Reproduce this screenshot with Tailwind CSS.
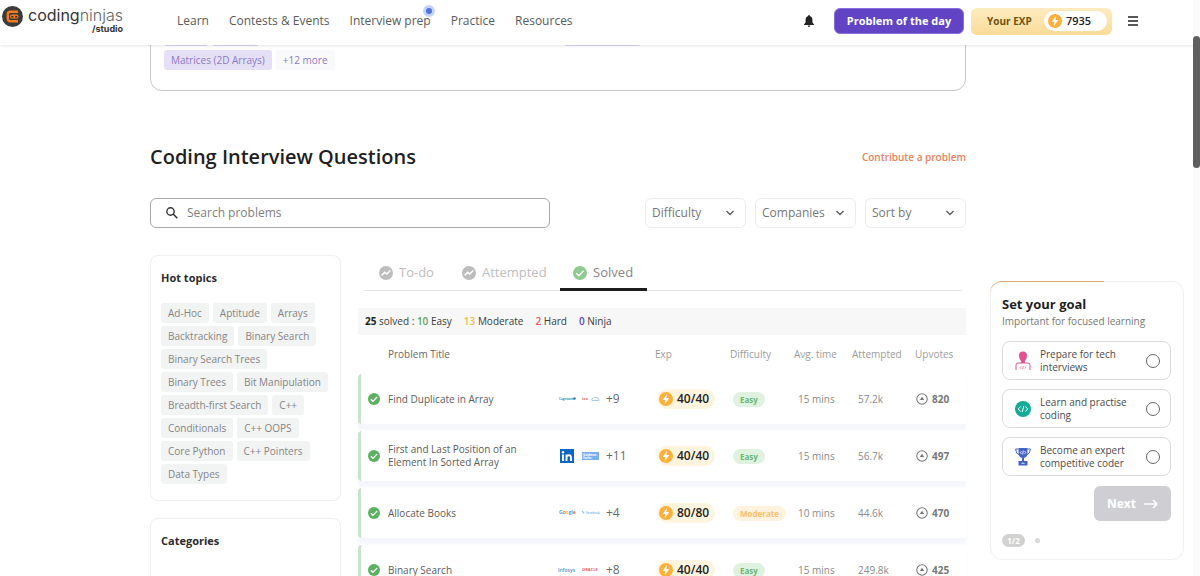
<!DOCTYPE html>
<html lang="en">
<head>
  <meta charset="UTF-8">
  <meta name="viewport" content="width=device-width, initial-scale=1.0">
  <title>Coding Interview Questions</title>
  <script src="https://cdn.jsdelivr.net/npm/@tailwindcss/browser@4"></script>
</head>
<body class="h-screen overflow-hidden bg-white font-['Open_Sans',sans-serif] text-[11px] text-[#5c5c5c]">

  <svg class="hidden">
    <symbol id="check" viewBox="0 0 16 16">
      <circle cx="8" cy="8" r="8" fill="currentColor"/>
      <path d="M3.8 8.3l2.8 2.8 5.6-5.7" fill="none" stroke="#fff" stroke-width="1.7"/>
    </symbol>
    <symbol id="trend" viewBox="0 0 16 16">
      <circle cx="8" cy="8" r="8" fill="currentColor"/>
      <path d="M3 10.7l3.6-3.6 2.2 2 4.2-4" fill="none" stroke="#fff" stroke-width="1.7"/>
    </symbol>
    <symbol id="bolt" viewBox="0 0 16 16">
      <circle cx="8" cy="8" r="8" fill="#fbb03b"/>
      <path d="M9.3 2L4.2 9h3.2l-.9 5 5.3-7.2H8.5z" fill="#fff"/>
    </symbol>
    <symbol id="upvote" viewBox="0 0 16 16">
      <circle cx="8" cy="8" r="7" fill="none" stroke="currentColor" stroke-width="1.4"/>
      <path d="M8 5l3 4.2H5z" fill="currentColor"/>
    </symbol>
    <symbol id="chevron" viewBox="0 0 10 10">
      <path d="M1.5 3L5 6.5 8.5 3" fill="none" stroke="currentColor" stroke-width="1.4"/>
    </symbol>
  </svg>

  <!-- header -->
  <header class="relative z-10 flex h-[45px] items-center bg-white pb-[3px] shadow-[0_1px_3px_rgba(0,0,0,0.10)]">
    <a href="#" class="ml-0.5 flex w-[122px] items-start gap-[5px] pb-0.5">
      <svg class="size-[21px] shrink-0" viewBox="0 0 21 21">
        <circle cx="10.5" cy="10.5" r="10.5" fill="#3d3a3a"/>
        <path d="M16 5.800H8.500Q5.800 5.800 5.800 8.300v4.400q0 2.500 2.700 2.500H16" fill="none" stroke="#f47b20" stroke-width="2.400"/>
        <rect x="8" y="8.600" width="8.500" height="3.800" rx="1.700" fill="#f47b20"/>
        <path d="M9.300 9.700l2.200.5v1.200H9.300zM15.200 9.700l-2.200.5v1.200h2.200z" fill="#2b2b2b"/>
      </svg>
      <span class="flex flex-col items-end font-[Inter,sans-serif] leading-none text-[#333]">
        <span class="text-[16px] leading-[18px]">coding<span class="font-light text-[#666]">ninjas</span></span>
        <span class="text-[9px] leading-[10px] font-bold">/studio</span>
      </span>
    </a>
    <nav class="ml-[53px] flex gap-5 text-[12px] whitespace-nowrap text-[#5a5a5a]">
      <a href="#">Learn</a>
      <a href="#">Contests &amp; Events</a>
      <a href="#" class="relative">Interview prep<span class="absolute -top-[7px] -right-1 size-3 rounded-full border-[3px] border-[#c5d3fa] bg-[#4f74d9]"></span></a>
      <a href="#">Practice</a>
      <a href="#">Resources</a>
    </nav>
    <div class="mr-[61px] ml-auto flex items-center">
      <button aria-label="Notifications" class="mr-5">
        <svg class="h-3 w-[10px]" viewBox="0 0 10 12"><path d="M5 0a1 1 0 0 1 .9.900A3.300 3.300 0 0 1 8.400 4.200v3L10 9.400v.6H0v-.6l1.600-2.200v-3A3.300 3.300 0 0 1 4.100.9 1 1 0 0 1 5 0zM3.700 10.600h2.600a1.300 1.300 0 0 1-2.600 0z" fill="#222"/></svg>
      </button>
      <button class="mr-[7px] h-[26px] w-[130px] rounded-md border border-[#8a6fe0] bg-[#6044c4] text-[11px] font-bold whitespace-nowrap text-white">Problem of the day</button>
      <div class="mr-[15px] flex h-[27px] w-[141px] items-center justify-between rounded-md bg-linear-to-b from-[#fdebc0] to-[#fbdc98] pr-[5px] pl-4 text-[10px] font-bold text-[#6f5212]">
        Your EXP
        <span class="flex h-[20px] w-[63px] items-center gap-1 rounded-full bg-white pl-1 text-[11px] font-semibold text-[#222]"><svg class="size-[14px]"><use href="#bolt"/></svg>7935</span>
      </div>
      <button aria-label="Menu">
        <svg class="size-3" viewBox="0 0 12 12"><path d="M1 2h10M1 6h10M1 10h10" stroke="#222" stroke-width="1.400"/></svg>
      </button>
    </div>
  </header>

  <div class="flex gap-6 pr-4 pl-[150px]">
    <main class="min-w-0 flex-1">

      <!-- topics card, scrolled under the header -->
      <section class="-mt-[17px] rounded-b-xl border border-[#c6c6c6] px-[13px] pb-5 text-[#8c79c8]">
        <div class="flex h-[17px] gap-1">
          <span class="w-11 rounded-[3px] bg-[#d9d2f0]"></span>
          <span class="w-[47px] rounded-[3px] bg-[#d9d2f0]"></span>
          <span class="ml-[301px] w-[77px] rounded-[3px] bg-[#d9d2f0]"></span>
        </div>
        <div class="mt-1 flex gap-1 text-[10px] leading-5">
          <span class="rounded-[3px] bg-[#e6e0f6] px-[7px]">Matrices (2D Arrays)</span>
          <span class="rounded-[3px] bg-[#f9f9fb] px-[7px]">+12 more</span>
        </div>
      </section>

      <div class="mt-[52px] flex items-center justify-between">
        <h1 class="text-[20px] leading-7 font-semibold text-[#1f1f1f]">Coding Interview Questions</h1>
        <a href="#" class="text-[10px] font-semibold text-[#e5835b]">Contribute a problem</a>
      </div>

      <div class="mt-[27px] flex h-[30px] items-center gap-[9px] text-[12px]">
        <label class="mr-auto flex h-full w-[400px] items-center gap-[9px] rounded-md border border-[#a9a9a9] pl-[15px]">
          <svg class="size-3" viewBox="0 0 12 12"><circle cx="4.500" cy="4.500" r="3.700" fill="none" stroke="#333" stroke-width="1.400"/><path d="M7.300 7.300l4 4" stroke="#333" stroke-width="1.600"/></svg>
          <input type="text" aria-label="Search problems" placeholder="Search problems" class="min-w-0 flex-1 outline-none placeholder:text-[#808080]">
        </label>
        <div class="relative h-full w-[101px]">
          <select aria-label="Difficulty" class="size-full appearance-none rounded-md border border-[#ececec] pl-1.5 text-[#777]"><option>Difficulty</option></select>
          <svg class="pointer-events-none absolute top-[10px] right-[11px] size-[10px]"><use href="#chevron"/></svg>
        </div>
        <div class="relative h-full w-[101px]">
          <select aria-label="Companies" class="size-full appearance-none rounded-md border border-[#ececec] pl-1.5 text-[#777]"><option>Companies</option></select>
          <svg class="pointer-events-none absolute top-[10px] right-[11px] size-[10px]"><use href="#chevron"/></svg>
        </div>
        <div class="relative h-full w-[101px]">
          <select aria-label="Sort by" class="size-full appearance-none rounded-md border border-[#ececec] pl-1.5 text-[#777]"><option>Sort by</option></select>
          <svg class="pointer-events-none absolute top-[10px] right-[11px] size-[10px]"><use href="#chevron"/></svg>
        </div>
      </div>

      <div class="mt-[27px] flex gap-[17px]">
        <!-- sidebar -->
        <div class="w-[191px] shrink-0 space-y-[17px]">
          <section class="rounded-lg border border-[#efefef] px-[10px] pt-3 pb-4">
            <h2 class="leading-5 font-bold text-[#2b2b2b]">Hot topics</h2>
            <div class="mt-[15px] flex flex-wrap gap-x-1 gap-y-[3px] text-[10px] leading-5 text-[#858585] *:rounded-[3px] *:bg-[#f2f3f3] *:px-[7px]">
              <a href="#">Ad-Hoc</a>
              <a href="#">Aptitude</a>
              <a href="#">Arrays</a>
              <a href="#">Backtracking</a>
              <a href="#">Binary Search</a>
              <a href="#" class="mr-10">Binary Search Trees</a>
              <a href="#">Binary Trees</a>
              <a href="#">Bit Manipulation</a>
              <a href="#">Breadth-first Search</a>
              <a href="#">C++</a>
              <a href="#">Conditionals</a>
              <a href="#">C++ OOPS</a>
              <a href="#">Core Python</a>
              <a href="#">C++ Pointers</a>
              <a href="#">Data Types</a>
            </div>
          </section>
          <section class="h-40 rounded-lg border border-[#efefef] px-[10px] pt-3">
            <h2 class="leading-5 font-bold text-[#2b2b2b]">Categories</h2>
          </section>
        </div>

        <!-- problem list -->
        <div class="min-w-0 flex-1">
          <div class="mr-1 ml-1.5 flex h-9 border-b border-[#e6e6e6] text-[13px] text-[#bdbdbd]">
            <button class="flex items-center gap-1.5 pl-[15px]"><svg class="size-[14px]"><use href="#trend"/></svg>To-do</button>
            <button class="ml-7 flex items-center gap-1.5"><svg class="size-[14px]"><use href="#trend"/></svg>Attempted</button>
            <button class="ml-[13px] flex h-9 w-[87px] items-center justify-center gap-1.5 rounded-t-xs border-t-3 border-b-3 border-t-transparent border-b-[#1c1c1c] text-[#858585]"><svg class="size-[14px] text-[#8fcb91]"><use href="#check"/></svg>Solved</button>
          </div>

          <div class="mt-[17px] flex h-[27px] items-center gap-3 bg-[#f7f7f7] pl-[7px] text-[10px] text-[#3c3c3c]">
            <p><b class="text-[#222]">25</b> solved : <b class="font-semibold text-[#5aa860]">10</b> Easy</p>
            <p><b class="font-semibold text-[#f0bd4b]">13</b> Moderate</p>
            <p><b class="font-semibold text-[#e45a5a]">2</b> Hard</p>
            <p><b class="font-semibold text-[#5a44c0]">0</b> Ninja</p>
          </div>

          <table class="w-full table-fixed border-separate border-spacing-x-0 border-spacing-y-[7px] text-left text-[10px] text-[#8a8a8a]">
            <colgroup>
              <col class="w-[30px]"><col><col class="w-[97px]"><col class="w-[75px]"><col class="w-[64px]"><col class="w-[58px]"><col class="w-[63px]"><col class="w-[51px]">
            </colgroup>
            <thead>
              <tr class="h-[25px] whitespace-nowrap text-[#9c9c9c] *:font-normal">
                <th></th><th class="text-[#666]">Problem Title</th><th></th><th>Exp</th><th>Difficulty</th><th>Avg. time</th><th>Attempted</th><th>Upvotes</th>
              </tr>
            </thead>
            <tbody class="[&>tr]:h-[50px] [&>tr]:bg-white [&>tr]:shadow-[0_6px_3px_#f4f6fb]">
              <tr>
                <td class="rounded-l-sm border-l-3 border-[#c9e2cb] pl-[7px]"><svg class="size-3 text-[#5cb062]"><use href="#check"/></svg></td>
                <td><a href="#" class="leading-[13px] text-[#5c5c5c]">Find Duplicate in Array</a></td>
                <td>
                  <div class="flex items-center gap-1.5 text-[12px] text-[#6a6a6a]">
                    <svg class="h-4 w-[18px] overflow-visible" viewBox="0 0 18 16"><text x="1" y="9" font-size="3" font-weight="700" fill="#3b8fb5">Cognizant</text><circle cx="16.500" cy="7.500" r="1.200" fill="#1f7fa8"/></svg>
                    <svg class="h-4 w-[18px] overflow-visible" viewBox="0 0 18 16"><text x="0" y="9" font-size="4" font-weight="700" fill="#e06a70">tcs</text><path d="M10 9.500q-1-2 1-2 1-2 3-1 2-.5 2 1.500 1.500 0 1 1.500z" fill="none" stroke="#a9c8e2"/></svg>
                    +9
                  </div>
                </td>
                <td><span class="ml-0.5 inline-flex h-5 w-[58px] items-center gap-1 rounded-full bg-[#fff5df] pl-0.5 text-[12px] font-semibold text-[#222]"><svg class="size-[14px] shrink-0"><use href="#bolt"/></svg>40/40</span></td>
                <td><span class="ml-[3px] rounded-full bg-[#dff2e0] px-[7px] py-0.5 text-[8px] font-bold text-[#6db573]">Easy</span></td>
                <td class="pl-1">15 mins</td>
                <td class="pl-1.5">57.2k</td>
                <td><span class="flex items-center gap-1 pl-px font-bold text-[#777]"><svg class="size-3 shrink-0"><use href="#upvote"/></svg>820</span></td>
              </tr>
              <tr>
                <td class="rounded-l-sm border-l-3 border-[#c9e2cb] pl-[7px]"><svg class="size-3 text-[#5cb062]"><use href="#check"/></svg></td>
                <td class="leading-[13px]"><a href="#" class="block w-[140px] text-[#5c5c5c]">First and Last Position of an Element In Sorted Array</a></td>
                <td>
                  <div class="flex items-center gap-1.5 text-[12px] text-[#6a6a6a]">
                    <svg class="h-4 w-[18px] overflow-visible" viewBox="0 0 18 16"><rect x="2" y="1" width="14" height="14" fill="#0a66c2"/><rect x="4" y="6.500" width="2" height="6.500" fill="#fff"/><circle cx="5" cy="4.300" r="1.200" fill="#fff"/><path d="M8.500 13V6.500M8.500 9.500q0-2.200 2.300-2.200t2.200 2.200V13" fill="none" stroke="#fff" stroke-width="1.900"/></svg>
                    <svg class="h-4 w-[18px] overflow-visible" viewBox="0 0 18 16"><rect x="0" y="4" width="17" height="8" fill="#7aaeeb"/><text x="1" y="7.500" font-size="3" font-weight="700" fill="#fff">Goldman</text><text x="1" y="11" font-size="3" font-weight="700" fill="#fff">Sachs</text></svg>
                    +11
                  </div>
                </td>
                <td><span class="ml-0.5 inline-flex h-5 w-[58px] items-center gap-1 rounded-full bg-[#fff5df] pl-0.5 text-[12px] font-semibold text-[#222]"><svg class="size-[14px] shrink-0"><use href="#bolt"/></svg>40/40</span></td>
                <td><span class="ml-[3px] rounded-full bg-[#dff2e0] px-[7px] py-0.5 text-[8px] font-bold text-[#6db573]">Easy</span></td>
                <td class="pl-1">15 mins</td>
                <td class="pl-1.5">56.7k</td>
                <td><span class="flex items-center gap-1 pl-px font-bold text-[#777]"><svg class="size-3 shrink-0"><use href="#upvote"/></svg>497</span></td>
              </tr>
              <tr>
                <td class="rounded-l-sm border-l-3 border-[#c9e2cb] pl-[7px]"><svg class="size-3 text-[#5cb062]"><use href="#check"/></svg></td>
                <td><a href="#" class="leading-[13px] text-[#5c5c5c]">Allocate Books</a></td>
                <td>
                  <div class="flex items-center gap-1.5 text-[12px] text-[#6a6a6a]">
                    <svg class="h-4 w-[18px] overflow-visible" viewBox="0 0 18 16"><text x="1" y="9" font-size="5" font-weight="600" fill="#4285f4">G<tspan fill="#ea4335">o</tspan><tspan fill="#fbbc05">o</tspan>g<tspan fill="#34a853">l</tspan><tspan fill="#ea4335">e</tspan></text></svg>
                    <svg class="h-4 w-[18px] overflow-visible" viewBox="0 0 18 16"><path d="M0 6.500l2 1-1 1" fill="none" stroke="#69b7e6"/><text x="4" y="9" font-size="3" font-weight="600" fill="#69b7e6">Facebook</text></svg>
                    +4
                  </div>
                </td>
                <td><span class="ml-0.5 inline-flex h-5 w-[58px] items-center gap-1 rounded-full bg-[#fff5df] pl-0.5 text-[12px] font-semibold text-[#222]"><svg class="size-[14px] shrink-0"><use href="#bolt"/></svg>80/80</span></td>
                <td><span class="ml-[3px] rounded-full bg-[#fff3e0] px-[7px] py-0.5 text-[8px] font-bold text-[#fbbf6b]">Moderate</span></td>
                <td class="pl-1">10 mins</td>
                <td class="pl-1.5">44.6k</td>
                <td><span class="flex items-center gap-1 pl-px font-bold text-[#777]"><svg class="size-3 shrink-0"><use href="#upvote"/></svg>470</span></td>
              </tr>
              <tr>
                <td class="rounded-l-sm border-l-3 border-[#c9e2cb] pl-[7px]"><svg class="size-3 text-[#5cb062]"><use href="#check"/></svg></td>
                <td><a href="#" class="leading-[13px] text-[#5c5c5c]">Binary Search</a></td>
                <td>
                  <div class="flex items-center gap-1.5 text-[12px] text-[#6a6a6a]">
                    <svg class="h-4 w-[18px] overflow-visible" viewBox="0 0 18 16"><text x="0" y="10" font-size="5" font-weight="600" fill="#4f93cf">Infosys</text></svg>
                    <svg class="h-4 w-[18px] overflow-visible" viewBox="0 0 18 16"><text x="0" y="9" font-size="4" font-weight="700" fill="#e0605f">ORACLE</text></svg>
                    +8
                  </div>
                </td>
                <td><span class="ml-0.5 inline-flex h-5 w-[58px] items-center gap-1 rounded-full bg-[#fff5df] pl-0.5 text-[12px] font-semibold text-[#222]"><svg class="size-[14px] shrink-0"><use href="#bolt"/></svg>40/40</span></td>
                <td><span class="ml-[3px] rounded-full bg-[#dff2e0] px-[7px] py-0.5 text-[8px] font-bold text-[#6db573]">Easy</span></td>
                <td class="pl-1">15 mins</td>
                <td class="pl-1.5">249.8k</td>
                <td><span class="flex items-center gap-1 pl-px font-bold text-[#777]"><svg class="size-3 shrink-0"><use href="#upvote"/></svg>425</span></td>
              </tr>
            </tbody>
          </table>
        </div>
      </div>
    </main>

    <!-- goal card -->
    <aside class="w-[194px] shrink-0 pt-[236px]">
      <form class="relative rounded-xl border border-[#f0f0f0] pt-3 pr-3 pb-3 pl-[11px]">
        <span class="absolute -top-px -left-px h-4 w-[114px] rounded-tl-xl border-t border-[#e0a878]"></span>
        <h2 class="text-[13px] leading-5 font-bold text-[#1f1f1f]">Set your goal</h2>
        <p class="text-[10px] leading-[14px] text-[#777]">Important for focused learning</p>
        <div class="mt-[13px] space-y-[9px] text-[10px] leading-[13px] text-[#4a4a4a]">
          <label class="flex h-[39px] items-center rounded-lg border border-[#dcdcdc] pr-[10px] pl-3">
            <svg class="mr-[9px] h-5 w-4 shrink-0" viewBox="0 0 16 20"><path d="M8 .5c2.600 0 4 1.700 4 4S10.700 9.500 9.800 10v2H6.200v-2C5.300 9.500 4 7 4 4.500s1.400-4 4-4z" fill="#e0528f"/><path d="M1 19v-5q0-2 2-2h10q2 0 2 2v5" fill="none" stroke="#e0528f"/><path d="M6.300 15.300L5 16.600l1.300 1.300M9.700 15.300l1.300 1.300-1.300 1.300M8.400 15l-.8 3.200" fill="none" stroke="#e0528f" stroke-width=".7"/></svg>
            <span class="w-24">Prepare for tech interviews</span>
            <input type="radio" name="goal" class="ml-auto size-[14px] appearance-none rounded-full border-[1.5px] border-[#666]">
          </label>
          <label class="flex h-[39px] items-center rounded-lg border border-[#dcdcdc] pr-[10px] pl-3">
            <svg class="mr-[9px] size-4 shrink-0" viewBox="0 0 16 16"><circle cx="8" cy="8" r="8" fill="#12ab97"/><path d="M5.600 5.500L3.200 8l2.400 2.500M10.400 5.500L12.800 8l-2.400 2.500M8.800 4.800l-1.600 6.400" fill="none" stroke="#fff"/></svg>
            <span class="w-24">Learn and practise coding</span>
            <input type="radio" name="goal" class="ml-auto size-[14px] appearance-none rounded-full border-[1.5px] border-[#666]">
          </label>
          <label class="flex h-[39px] items-center rounded-lg border border-[#dcdcdc] pr-[10px] pl-3">
            <svg class="mr-[9px] h-5 w-4 shrink-0" viewBox="0 0 16 20"><path d="M3.500 1h9v5q0 4-3.500 5v3h3.500v4.500h-9V14H7v-3Q3.500 10 3.500 6z" fill="#4563c4"/><path d="M3.500 2H.6q0 5 4 6M12.500 2h2.900q0 5-4 6" fill="none" stroke="#4563c4"/><path d="M6.500 4L5.200 5.500 6.500 7M9.500 4l1.300 1.500L9.500 7M8.400 3.600l-.8 4M6.500 16.300h3" fill="none" stroke="#fff" stroke-width=".8"/></svg>
            <span class="w-24">Become an expert competitive coder</span>
            <input type="radio" name="goal" class="ml-auto size-[14px] appearance-none rounded-full border-[1.5px] border-[#666]">
          </label>
        </div>
        <button type="button" class="mt-[10px] ml-auto flex h-[35px] w-[77px] items-center justify-center gap-2 rounded-md bg-[#cfcfd3] text-[12px] font-bold text-white">Next
          <svg class="h-[10px] w-[14px]" viewBox="0 0 14 10"><path d="M0 5h13M9 1l4 4-4 4" fill="none" stroke="#fff" stroke-width="1.500"/></svg>
        </button>
        <div class="mt-[13px] flex items-center gap-[10px]">
          <span class="h-[13px] w-[23px] rounded-full bg-[#d2d2d2] text-center text-[8px] leading-[13px] font-bold text-white">1/2</span>
          <span class="size-[5px] rounded-full bg-[#d8d8d8]"></span>
        </div>
      </form>
    </aside>
  </div>

  <!-- scrollbar -->
  <div class="fixed inset-y-0 right-0 z-20 w-[7px] bg-[#fafafa] pt-9">
    <div class="h-[132px] rounded-full bg-[#5f5f5f]"></div>
  </div>

</body>
</html>
